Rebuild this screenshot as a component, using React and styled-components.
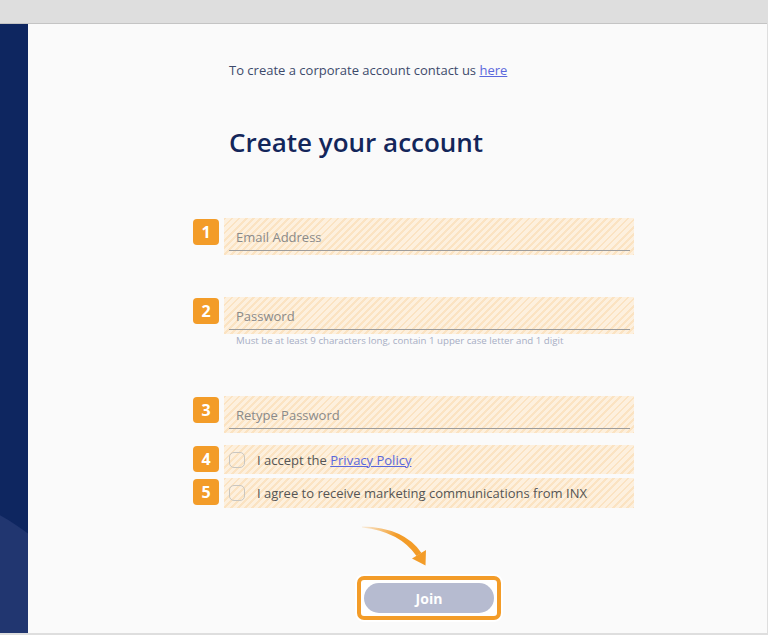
import React from 'react';
import styled, { createGlobalStyle } from 'styled-components';

const GlobalStyle = createGlobalStyle`
  html, body {
    margin: 0;
    padding: 0;
    overflow: hidden;
  }
  body {
    font-family: "Open Sans", "Noto Sans", Arial, sans-serif;
  }
`;

const orange = '#f39c28';

const Window = styled.div`
  width: 768px;
  height: 635px;
  display: flex;
  flex-direction: column;
  background: #dedede;
  box-sizing: border-box;
  padding: 0 1px 2px 0;
`;

const TopBar = styled.div`
  height: 23px;
  flex: none;
  border-bottom: 1px solid #c4c4c4;
`;

const Body = styled.div`
  flex: 1;
  display: flex;
  min-height: 0;
`;

const Sidebar = styled.aside`
  width: 28px;
  flex: none;
  background: #0e2660;
  position: relative;
  overflow: hidden;
`;

const SideBlob = styled.div`
  position: absolute;
  left: -310px;
  top: 466px;
  width: 420px;
  height: 420px;
  border-radius: 50%;
  background: #213670;
`;

const Main = styled.main`
  flex: 1;
  background: #fafafa;
  padding: 37px 0 0 165px;
  box-sizing: border-box;
`;

const Form = styled.div`
  width: 441px;
  display: flex;
  flex-direction: column;
`;

const Intro = styled.p`
  margin: 0 0 0 36px;
  font-size: 13px;
  line-height: 18px;
  color: #3d4a6b;
`;

const Link = styled.a`
  color: #5a68dc;
  text-decoration: underline;
  cursor: pointer;
`;

const Heading = styled.h1`
  margin: 45px 0 0 36px;
  font-size: 26px;
  line-height: 36px;
  font-weight: 600;
  color: #13265a;
`;

const Row = styled.div`
  display: flex;
  align-items: flex-start;
  gap: 5px;
  margin-top: ${(p) => p.$gap}px;
`;

const Badge = styled.div`
  width: 26px;
  height: 26px;
  flex: none;
  margin-top: 1px;
  border-radius: 4px;
  background: ${orange};
  color: #fff;
  font-size: 16px;
  font-weight: 700;
  display: flex;
  align-items: center;
  justify-content: center;
`;

const Hatch = styled.div`
  flex: 1;
  box-sizing: border-box;
  height: ${(p) => p.$h}px;
  background: repeating-linear-gradient(
    135deg,
    #fbe3c2 0px,
    #fbe3c2 2px,
    #fdf0de 2px,
    #fdf0de 5px
  );
`;

const FieldBox = styled(Hatch)`
  padding: 8px 4px 0 5px;
`;

const Input = styled.input`
  display: block;
  width: 100%;
  height: 25px;
  box-sizing: border-box;
  border: none;
  border-bottom: 1px solid #9c9c9c;
  background: transparent;
  padding: 0 0 2px 7px;
  font-family: inherit;
  font-size: 13px;
  color: #555;
  outline: none;
  &::placeholder {
    color: #8a8a8a;
  }
`;

const Helper = styled.div`
  margin: 0 0 0 43px;
  font-size: 9.7px;
  line-height: 13px;
  color: #a7aec4;
`;

const CheckBox = styled(Hatch)`
  display: flex;
  align-items: center;
  padding-left: 5px;
  gap: 12px;
  font-size: 13px;
  color: #555;
`;

const Tick = styled.span`
  width: 16px;
  height: 16px;
  box-sizing: border-box;
  border: 1px solid #c9c6c0;
  border-radius: 5px;
  flex: none;
`;

const ArrowWrap = styled.div`
  margin: 12px 0 0 162px;
  height: 50px;
`;

const JoinFrame = styled.div`
  margin: 6px 0 0 164px;
  width: 144px;
  height: 44px;
  box-sizing: border-box;
  border: 4px solid ${orange};
  border-radius: 7px;
  background: #fff;
  padding: 3px;
  box-shadow: 0 0 0 2px #fff;
`;

const JoinButton = styled.button`
  width: 100%;
  height: 100%;
  border: none;
  border-radius: 15px;
  background: #b6bbd0;
  color: #fff;
  font-family: inherit;
  font-size: 14px;
  font-weight: 700;
  cursor: pointer;
`;

const fields = [
  { n: 1, ph: 'Email Address', type: 'email', gap: 58 },
  { n: 2, ph: 'Password', type: 'password', gap: 42, helper: 'Must be at least 9 characters long, contain 1 upper case letter and 1 digit' },
  { n: 3, ph: 'Retype Password', type: 'password', gap: 49 },
];

const Arrow = () => (
  <svg width="80" height="50" viewBox="0 0 80 50">
    <defs>
      <linearGradient id="arrowFade" x1="0" y1="0" x2="1" y2="0.4">
        <stop offset="0" stopColor={orange} stopOpacity="0.15" />
        <stop offset="0.6" stopColor={orange} stopOpacity="1" />
      </linearGradient>
    </defs>
    <path d="M7 6.6 Q49 7.5 66.5 33 L61.5 36 Q45 11.5 7 7.4 Z" fill="url(#arrowFade)" />
    <path d="M57 38.5 L71 30 L70.5 45.5 Z" fill={orange} />
  </svg>
);

export default function App() {
  return (
    <Window>
      <GlobalStyle />
      <TopBar />
      <Body>
        <Sidebar>
          <SideBlob />
        </Sidebar>
        <Main>
          <Form>
            <Intro>
              To create a corporate account contact us <Link>here</Link>
            </Intro>
            <Heading>Create your account</Heading>
            {fields.map((f) => (
              <React.Fragment key={f.n}>
                <Row $gap={f.gap}>
                  <Badge>{f.n}</Badge>
                  <FieldBox $h={37}>
                    <Input type={f.type} placeholder={f.ph} />
                  </FieldBox>
                </Row>
                {f.helper && <Helper>{f.helper}</Helper>}
              </React.Fragment>
            ))}
            <Row $gap={12}>
              <Badge>4</Badge>
              <CheckBox $h={29}>
                <Tick />
                <span>
                  I accept the <Link>Privacy Policy</Link>
                </span>
              </CheckBox>
            </Row>
            <Row $gap={4}>
              <Badge>5</Badge>
              <CheckBox $h={30}>
                <Tick />
                <span>I agree to receive marketing communications from INX</span>
              </CheckBox>
            </Row>
            <ArrowWrap>
              <Arrow />
            </ArrowWrap>
            <JoinFrame>
              <JoinButton>Join</JoinButton>
            </JoinFrame>
          </Form>
        </Main>
      </Body>
    </Window>
  );
}
